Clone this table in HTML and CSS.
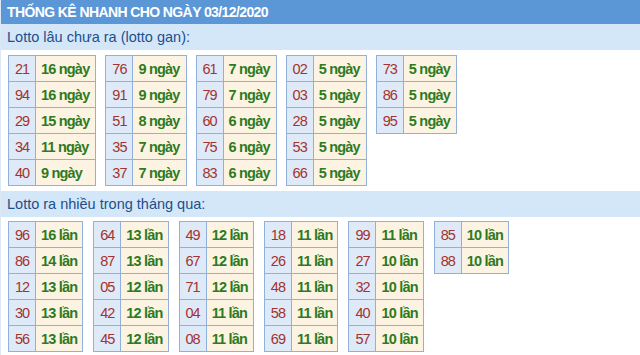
FILE: index.html
```html
<!DOCTYPE html>
<html lang="vi">
<head>
<meta charset="utf-8">
<title>Thống kê nhanh</title>
<link rel="stylesheet" href="styles.css">
</head>
<body>
<div class="page">
  <div class="header">THỐNG KÊ NHANH CHO NGÀY 03/12/2020</div>
  <div class="section-title">Lotto lâu chưa ra (lotto gan):</div>
  <div class="tables tables-gan">
    <table><tr><td class="num">21</td><td class="val">16 ngày</td></tr><tr><td class="num">94</td><td class="val">16 ngày</td></tr><tr><td class="num">29</td><td class="val">15 ngày</td></tr><tr><td class="num">34</td><td class="val">11 ngày</td></tr><tr><td class="num">40</td><td class="val">9 ngày</td></tr></table>
    <table><tr><td class="num">76</td><td class="val">9 ngày</td></tr><tr><td class="num">91</td><td class="val">9 ngày</td></tr><tr><td class="num">51</td><td class="val">8 ngày</td></tr><tr><td class="num">35</td><td class="val">7 ngày</td></tr><tr><td class="num">37</td><td class="val">7 ngày</td></tr></table>
    <table><tr><td class="num">61</td><td class="val">7 ngày</td></tr><tr><td class="num">79</td><td class="val">7 ngày</td></tr><tr><td class="num">60</td><td class="val">6 ngày</td></tr><tr><td class="num">75</td><td class="val">6 ngày</td></tr><tr><td class="num">83</td><td class="val">6 ngày</td></tr></table>
    <table><tr><td class="num">02</td><td class="val">5 ngày</td></tr><tr><td class="num">03</td><td class="val">5 ngày</td></tr><tr><td class="num">28</td><td class="val">5 ngày</td></tr><tr><td class="num">53</td><td class="val">5 ngày</td></tr><tr><td class="num">66</td><td class="val">5 ngày</td></tr></table>
    <table><tr><td class="num">73</td><td class="val">5 ngày</td></tr><tr><td class="num">86</td><td class="val">5 ngày</td></tr><tr><td class="num">95</td><td class="val">5 ngày</td></tr></table>
  </div>
  <div class="section-title">Lotto ra nhiều trong tháng qua:</div>
  <div class="tables tables-nhieu">
    <table><tr><td class="num">96</td><td class="val">16 lần</td></tr><tr><td class="num">86</td><td class="val">14 lần</td></tr><tr><td class="num">12</td><td class="val">13 lần</td></tr><tr><td class="num">30</td><td class="val">13 lần</td></tr><tr><td class="num">56</td><td class="val">13 lần</td></tr></table>
    <table><tr><td class="num">64</td><td class="val">13 lần</td></tr><tr><td class="num">87</td><td class="val">13 lần</td></tr><tr><td class="num">05</td><td class="val">12 lần</td></tr><tr><td class="num">42</td><td class="val">12 lần</td></tr><tr><td class="num">45</td><td class="val">12 lần</td></tr></table>
    <table><tr><td class="num">49</td><td class="val">12 lần</td></tr><tr><td class="num">67</td><td class="val">12 lần</td></tr><tr><td class="num">71</td><td class="val">12 lần</td></tr><tr><td class="num">04</td><td class="val">11 lần</td></tr><tr><td class="num">08</td><td class="val">11 lần</td></tr></table>
    <table><tr><td class="num">18</td><td class="val">11 lần</td></tr><tr><td class="num">26</td><td class="val">11 lần</td></tr><tr><td class="num">48</td><td class="val">11 lần</td></tr><tr><td class="num">58</td><td class="val">11 lần</td></tr><tr><td class="num">69</td><td class="val">11 lần</td></tr></table>
    <table><tr><td class="num">99</td><td class="val">11 lần</td></tr><tr><td class="num">27</td><td class="val">10 lần</td></tr><tr><td class="num">32</td><td class="val">10 lần</td></tr><tr><td class="num">40</td><td class="val">10 lần</td></tr><tr><td class="num">57</td><td class="val">10 lần</td></tr></table>
    <table><tr><td class="num">85</td><td class="val">10 lần</td></tr><tr><td class="num">88</td><td class="val">10 lần</td></tr></table>
  </div>
</div>
</body>
</html>
```

FILE: styles.css
```css
html, body {
  margin: 0;
  padding: 0;
  background: #ffffff;
}

.page {
  font-family: "Liberation Sans", Arial, sans-serif;
  width: 640px;
  border-left: 1px solid #dce8f4;
  box-sizing: border-box;
}

.header {
  height: 24px;
  line-height: 25px;
  background: #5b97d6;
  color: #ffffff;
  font-weight: bold;
  font-size: 14px;
  letter-spacing: -0.6px;
  padding-left: 6px;
  white-space: nowrap;
}

.section-title {
  height: 26px;
  line-height: 26px;
  background: #d4e7f9;
  color: #1d4f8c;
  font-size: 14.5px;
  padding-left: 6px;
  white-space: nowrap;
}

.tables {
  display: flex;
  align-items: flex-start;
  padding: 5px 0 5px 7px;
}

.tables-gan {
  gap: 9px;
}

.tables-nhieu {
  gap: 10px;
  padding-top: 4px;
}

.tables-nhieu .val {
  padding-right: 5px;
}

table {
  border-collapse: collapse;
  border: 1px solid #92b1da;
}

td {
  border: 1px solid #92b1da;
  height: 25px;
  padding: 0;
  font-size: 14.5px;
  white-space: nowrap;
}

.num {
  width: 26px;
  background: #dfeaf8;
  color: #a3332f;
  letter-spacing: -1px;
  text-align: center;
}

.val {
  background: #fdf3e3;
  color: #2e7b1e;
  font-weight: bold;
  letter-spacing: -0.8px;
  padding: 0 6px 0 5px;
}
```
